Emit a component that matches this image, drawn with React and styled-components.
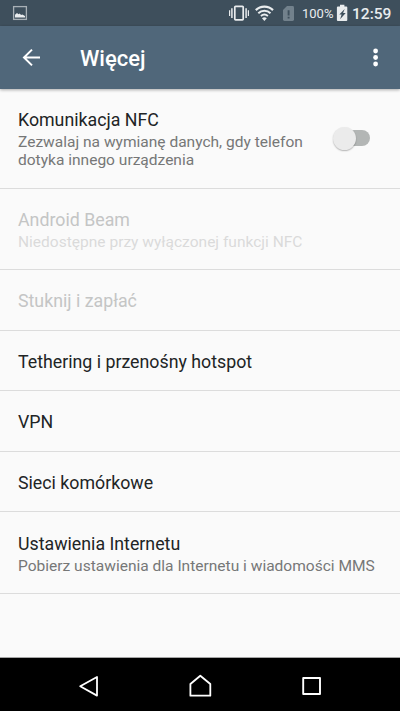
import React from "react";
import styled, { createGlobalStyle } from "styled-components";

const GlobalStyle = createGlobalStyle`
  * { box-sizing: border-box; }
  body { margin: 0; background: #fafafa; font-family: Roboto, "Noto Sans", sans-serif; }
`;

const Screen = styled.div`
  width: 400px;
  height: 711px;
  display: flex;
  flex-direction: column;
  background: #fafafa;
  overflow: hidden;
`;

const StatusBar = styled.div`
  height: 26px;
  flex: none;
  display: flex;
  justify-content: space-between;
  background: #3e4f5c;
  color: #e9ecee;
`;

const Icon = styled.svg`
  display: block;
  flex: none;
  overflow: visible;
`;

const StatusGroup = styled.div`
  display: flex;
  align-items: center;
`;

const BatteryLevel = styled.span`
  width: 34px;
  font-size: 13px;
  line-height: 26px;
  padding-top: 1px;
  white-space: nowrap;
`;

const Clock = styled.span`
  width: 48px;
  font-size: 15.56px;
  font-weight: 500;
  line-height: 26px;
  padding-top: 1px;
  white-space: nowrap;
`;

const AppBar = styled.header`
  height: 63px;
  flex: none;
  display: flex;
  align-items: center;
  background: #50677a;
  color: #fff;
  box-shadow: 0 1px 3px rgba(0, 0, 0, 0.32);
  z-index: 1;
`;

const AppTitle = styled.h1`
  flex: 1;
  margin: 0;
  padding-top: 2px;
  font-size: 22px;
  line-height: 26px;
  font-weight: 500;
`;

const IconButton = styled.button`
  display: block;
  padding: 0;
  border: 0;
  background: none;
  color: inherit;
  width: ${(p) => p.$width}px;
  height: 63px;
`;

const List = styled.main`
  flex: 1;
  border-bottom: 1px solid #a5a5a5;
`;

const Row = styled.div`
  height: ${(p) => p.$height}px;
  display: flex;
  align-items: center;
  justify-content: space-between;
  padding: 0 30px 0 18px;
  border-bottom: 1px solid #dcdcdc;
`;

const RowText = styled.div`
  flex: none;
  padding-top: ${(p) => p.$shift}px;
`;

const Title = styled.div`
  font-size: 17.78px;
  line-height: 22px;
  color: ${(p) => (p.$disabled ? "#c4c5c5" : "#212425")};
  white-space: nowrap;
`;

const Summary = styled.div`
  margin-top: 2px;
  font-size: 15.54px;
  line-height: 18px;
  color: ${(p) => (p.$disabled ? "#dadada" : "#767777")};
  white-space: pre;
`;

const SwitchTrack = styled.div`
  width: 33px;
  height: 16px;
  margin-top: -1px;
  border-radius: 8px;
  background: #b3b6b5;
  display: flex;
  align-items: center;
`;

const SwitchThumb = styled.div`
  width: 23px;
  height: 23px;
  flex: none;
  margin-left: -4px;
  border-radius: 50%;
  background: #ebebeb;
  box-shadow: 0 1px 1.5px rgba(0, 0, 0, 0.28);
`;

const NavBar = styled.nav`
  height: 53px;
  flex: none;
  display: flex;
  justify-content: center;
  background: #000;
`;

const NavButton = styled.button`
  width: 111px;
  height: 53px;
  padding: 0;
  border: 0;
  background: none;
  color: #fff;
`;

const rows = [
  {
    height: 100,
    shift: 1,
    title: "Komunikacja NFC",
    summary: "Zezwalaj na wymianę danych, gdy telefon\ndotyka innego urządzenia",
    toggle: true,
  },
  {
    height: 81,
    shift: 2,
    title: "Android Beam",
    summary: "Niedostępne przy wyłączonej funkcji NFC",
    disabled: true,
  },
  { height: 61, shift: 1, title: "Stuknij i zapłać", disabled: true },
  { height: 60, shift: 3, title: "Tethering i przenośny hotspot" },
  { height: 61, shift: 1, title: "VPN" },
  { height: 60, shift: 2, title: "Sieci komórkowe" },
  {
    height: 82,
    shift: 3,
    title: "Ustawienia Internetu",
    summary: "Pobierz ustawienia dla Internetu i wiadomości MMS",
  },
];

function PictureIcon() {
  return (
    <Icon width="40" height="26" viewBox="0 0 40 26">
      <rect x="13.6" y="6.600" width="12.800" height="12.800" fill="none" stroke="#a8b0b6" strokeWidth="1.300" />
      <path d="M15 17.500v-2.800l2-1.700 1.500 1.200 1.100-.8 1.500 1.600 1.200-.5 2.700 1.500v1.500z" fill="#e9ecee" />
    </Icon>
  );
}

function SignalIcons() {
  return (
    <Icon width="74" height="26" viewBox="228 0 74 26">
      <g fill="none" stroke="#e9ecee">
        <rect x="234.800" y="6.300" width="8.400" height="13.600" rx=".8" strokeWidth="1.700" />
        <path d="M231.900 8.200v9.800M246.100 8.200v9.800" strokeWidth="1.500" />
        <path d="M229.600 10.200v5.800M248.400 10.200v5.800" strokeWidth="1.200" />
        <path d="M255.800 10.100a12.200 12.200 0 0 1 17.200 0" strokeWidth="2.200" />
        <path d="M258.300 13.200a8.800 8.800 0 0 1 12.200 0" strokeWidth="2" />
        <path d="M260.900 16a5.400 5.400 0 0 1 7 0" strokeWidth="1.800" />
      </g>
      <path d="M264.400 21l-2.400-2.800a3.600 3.600 0 0 1 4.800 0z" fill="#e9ecee" />
      <path d="M287 6h5.600a1.400 1.400 0 0 1 1.400 1.400v12.200a1.400 1.400 0 0 1-1.400 1.400h-8.200a1.400 1.400 0 0 1-1.400-1.400V10z" fill="#72818c" />
      <path d="M288.600 10.200v5.300M288.600 16.700v1.900" stroke="#3e4f5c" strokeWidth="1.900" />
    </Icon>
  );
}

function BatteryIcon() {
  return (
    <Icon width="16" height="26" viewBox="336 0 16 26">
      <path d="M340 4.700h4.400v1.700h1.900a1 1 0 0 1 1 1V20a1 1 0 0 1-1 1h-8.400a1 1 0 0 1-1-1V7.400a1 1 0 0 1 1-1h2.100z" fill="#e9ecee" />
      <path d="M344.700 8.900l-5.400 5.500h2.300l-1.500 4.900 5.600-6.300h-2.600z" fill="#3e4f5c" />
    </Icon>
  );
}

function SettingRow({ item }) {
  return (
    <Row $height={item.height}>
      <RowText $shift={item.shift}>
        <Title $disabled={item.disabled}>{item.title}</Title>
        {item.summary && <Summary $disabled={item.disabled}>{item.summary}</Summary>}
      </RowText>
      {item.toggle && (
        <SwitchTrack role="switch" aria-checked="false">
          <SwitchThumb />
        </SwitchTrack>
      )}
    </Row>
  );
}

export default function App() {
  return (
    <>
      <GlobalStyle />
      <Screen>
        <StatusBar>
          <PictureIcon />
          <StatusGroup>
            <SignalIcons />
            <BatteryLevel>100%</BatteryLevel>
            <BatteryIcon />
            <Clock>12:59</Clock>
          </StatusGroup>
        </StatusBar>
        <AppBar>
          <IconButton $width={80} aria-label="Wstecz">
            <Icon width="80" height="63" viewBox="0 26 80 63">
              <path d="M40 57.500H24M32 49.600l-8 7.900 8 7.900" fill="none" stroke="currentColor" strokeWidth="2" />
            </Icon>
          </IconButton>
          <AppTitle>Więcej</AppTitle>
          <IconButton $width={50} aria-label="Menu">
            <Icon width="50" height="63" viewBox="350 26 50 63" fill="currentColor">
              <circle cx="375.600" cy="51" r="2.400" />
              <circle cx="375.600" cy="57.500" r="2.400" />
              <circle cx="375.600" cy="64" r="2.400" />
            </Icon>
          </IconButton>
        </AppBar>
        <List>
          {rows.map((item) => (
            <SettingRow key={item.title} item={item} />
          ))}
        </List>
        <NavBar>
          <NavButton aria-label="Wstecz">
            <Icon width="111" height="53" viewBox="34 658 111 53">
              <path d="M97 677v18.600L80.200 686.300z" fill="none" stroke="currentColor" strokeWidth="1.800" strokeLinejoin="round" />
            </Icon>
          </NavButton>
          <NavButton aria-label="Ekran główny">
            <Icon width="111" height="53" viewBox="145 658 111 53">
              <path d="M190.400 695.700V684l9.900-8.300 10 8.300v11.700z" fill="none" stroke="currentColor" strokeWidth="1.800" strokeLinejoin="round" />
            </Icon>
          </NavButton>
          <NavButton aria-label="Ostatnie">
            <Icon width="111" height="53" viewBox="256 658 111 53">
              <rect x="303.200" y="678" width="16.800" height="16" fill="none" stroke="currentColor" strokeWidth="1.900" strokeLinejoin="round" />
            </Icon>
          </NavButton>
        </NavBar>
      </Screen>
    </>
  );
}
